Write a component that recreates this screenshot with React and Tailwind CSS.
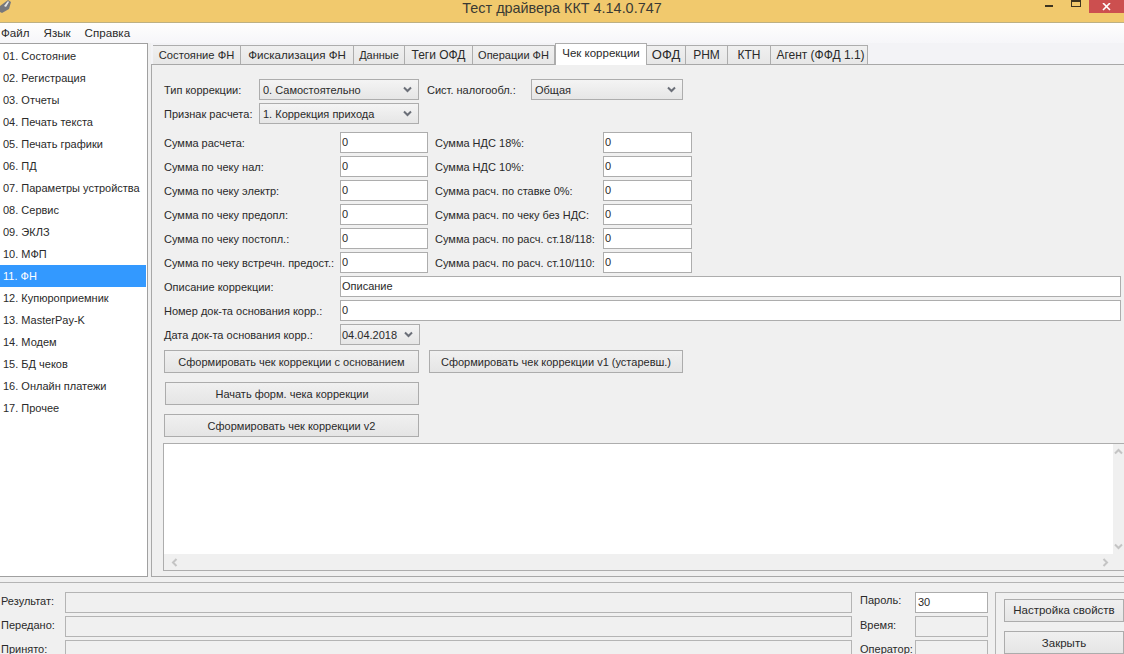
const menuItems = ['Файл', 'Язык', 'Справка'];

const sideItems = [
  '01. Состояние', '02. Регистрация', '03. Отчеты', '04. Печать текста', '05. Печать графики', '06. ПД',
  '07. Параметры устройства', '08. Сервис', '09. ЭКЛЗ', '10. МФП', '11. ФН', '12. Купюроприемник',
  '13. MasterPay-K', '14. Модем', '15. БД чеков', '16. Онлайн платежи', '17. Прочее',
];

const tabs = [
  { name: 'Состояние ФН', w: 'w-[88px] text-[11.2px]' },
  { name: 'Фискализация ФН', w: 'w-[113px] text-[11.6px]' },
  { name: 'Данные', w: 'w-[51px]' },
  { name: 'Теги ОФД', w: 'w-[68px] text-[12px]' },
  { name: 'Операции ФН', w: 'w-[82px]' },
  { name: 'Чек коррекции', w: 'w-[92px] text-[11.5px]', active: true },
  { name: 'ОФД', w: 'w-[39px] text-[13px]' },
  { name: 'РНМ', w: 'w-[42px] text-[12px]' },
  { name: 'КТН', w: 'w-[43px] text-[12px]' },
  { name: 'Агент (ФФД 1.1)', w: 'w-[97px] text-[12px] pl-[3px]' },
];

const sumRows = [
  ['Сумма расчета:', 'Сумма НДС 18%:'],
  ['Сумма по чеку нал:', 'Сумма НДС 10%:'],
  ['Сумма по чеку электр:', 'Сумма расч. по ставке 0%:'],
  ['Сумма по чеку предопл:', 'Сумма расч. по чеку без НДС:'],
  ['Сумма по чеку постопл.:', 'Сумма расч. по расч. ст.18/118:'],
  ['Сумма по чеку встречн. предост.:', 'Сумма расч. по расч. ст.10/110:'],
];

const Chevron = () => (
  <svg width="9" height="7" viewBox="0 0 9 7" className="shrink-0">
    <path d="M1 1.5 L4.5 5 L8 1.5" fill="none" stroke="#6b6f78" strokeWidth="2" />
  </svg>
);

const Select = ({ value, className }) => (
  <div className={`flex h-[21px] shrink-0 items-center justify-between border border-[#adadad] bg-gradient-to-b from-[#f4f4f4] to-[#e6e6e6] pr-[6px] ${className}`}>
    <span className="pt-[2px]">{value}</span>
    <Chevron />
  </div>
);

const Input = ({ value, className }) => (
  <div className={`flex h-[21px] shrink-0 items-center border border-[#adadad] bg-white pb-[1px] pl-[1px] ${className}`}>{value}</div>
);

const Button = ({ children, className }) => (
  <div className={`flex h-[23px] shrink-0 items-center justify-center border border-[#acacac] bg-gradient-to-b from-[#f0f0f0] to-[#e5e5e5] pt-[2px] ${className}`}>
    {children}
  </div>
);

export default function App() {
  return (
    <div className="flex h-[654px] w-[1124px] flex-col overflow-hidden bg-[#f0f0f0] text-[11px] text-[#2a2a2a] [font-family:'Liberation_Sans',sans-serif]">
      <div className="relative flex h-[23px] shrink-0 items-center justify-center border-b border-[#bdb083] bg-[#f1c96d] pb-[5px] text-[14.4px] text-[#3a3a34]">
        <svg width="14" height="14" viewBox="0 0 14 14" className="absolute left-0 top-0">
          <path d="M0 6 L8 0 L11 2 L9 9 L2 13 L0 12 Z" fill="#77787c" />
          <path d="M4 6 L8 1 L9 2 L6 7 Z" fill="#e6e6e6" />
        </svg>
        Тест драйвера ККТ 4.14.0.747
        <div className="absolute right-0 top-0 flex items-start">
          <div className="mr-[18px] mt-[5px] h-[2px] w-[8px] bg-[#3d3420]" />
          <div className="mr-[8px] h-[7px] w-[10px] border border-t-2 border-[#3d3420]" />
          <div className="flex h-[13px] w-[35px] items-center justify-center bg-[#cc4f4f]">
            <svg width="9" height="8" viewBox="0 0 9 8">
              <path d="M1 0 L8 7 M8 0 L1 7" stroke="#fff" strokeWidth="1.6" />
            </svg>
          </div>
        </div>
      </div>

      <div className="flex h-[20px] shrink-0 items-center gap-[14px] bg-gradient-to-b from-[#fffefd] to-[#f6f6f9] pl-[1px] text-[11.6px]">
        {menuItems.map((m) => <span key={m}>{m}</span>)}
      </div>

      <div className="flex h-[534px] shrink-0">
        <div className="flex w-[148px] shrink-0 flex-col border-r border-t border-b border-[#a0a0a0] bg-white pr-[1px] pt-[1px]">
          {sideItems.map((item) => (
            <div
              key={item}
              className={`flex h-[22px] shrink-0 items-center pl-[3px] ${item === '11. ФН' ? 'bg-[#3399ff] text-white' : ''}`}
            >
              {item}
            </div>
          ))}
        </div>

        <div className="ml-[3px] flex min-w-0 flex-1 flex-col">
          <div className="flex h-[21px] shrink-0 items-end bg-[#f3f3f6] pl-[2px]">
            {tabs.map((t) => (
              <div
                key={t.name}
                className={
                  t.active
                    ? `z-10 -mb-px flex h-[22px] items-center justify-center border border-b-0 border-[#adadad] bg-white pb-[2px] ${t.w}`
                    : `flex h-[19px] items-center justify-center border-r border-t border-[#adadad] bg-gradient-to-b from-[#f0f0f0] to-[#e7e7e7] ${t.w}`
                }
              >
                {t.name}
              </div>
            ))}
          </div>

          <div className="flex min-h-0 flex-1 flex-col border-l border-t border-b border-[#a8a8a8] pl-[11px] pt-[14px]">
            <div className="flex flex-col gap-[3px] pl-[1px]">
              <div className="flex items-center">
                <span className="w-[95px] shrink-0 pt-[2px]">Тип коррекции:</span>
                <Select value="0. Самостоятельно" className="w-[160px] pl-[3px]" />
                <span className="ml-[8px] w-[104px] shrink-0 pt-[2px]">Сист. налогообл.:</span>
                <Select value="Общая" className="w-[152px] pl-[3px]" />
              </div>
              <div className="flex items-center">
                <span className="w-[95px] shrink-0 pt-[2px]">Признак расчета:</span>
                <Select value="1. Коррекция прихода" className="w-[160px] pl-[3px]" />
              </div>

              <div className="mt-[5px] flex flex-col gap-[3px]">
                {sumRows.map(([left, right]) => (
                  <div key={left} className="flex items-center">
                    <span className="w-[176px] shrink-0 pt-[2px]">{left}</span>
                    <Input value="0" className="w-[88px]" />
                    <span className="ml-[7px] w-[168px] shrink-0 pt-[2px]">{right}</span>
                    <Input value="0" className="w-[89px]" />
                  </div>
                ))}
              </div>

              <div className="flex items-center">
                <span className="w-[176px] shrink-0 pt-[2px]">Описание коррекции:</span>
                <Input value="Описание" className="w-[781px]" />
              </div>
              <div className="flex items-center">
                <span className="w-[176px] shrink-0 pt-[2px]">Номер док-та основания корр.:</span>
                <Input value="0" className="w-[781px]" />
              </div>
              <div className="flex items-center">
                <span className="w-[176px] shrink-0 pt-[2px]">Дата док-та основания корр.:</span>
                <Select value="04.04.2018" className="w-[80px] pl-[1px]" />
              </div>
            </div>

            <div className="mt-[5px] flex gap-[10px] pl-[1px]">
              <Button className="w-[255px]">Сформировать чек коррекции с основанием</Button>
              <Button className="w-[254px]">Сформировать чек коррекции v1 (устаревш.)</Button>
            </div>
            <Button className="ml-[2px] mt-[9px] w-[254px]">Начать форм. чека коррекции</Button>
            <Button className="ml-[1px] mt-[9px] w-[255px]">Сформировать чек коррекции v2</Button>

            <div className="mt-[6px] flex h-[128px] shrink-0 flex-col border-l border-t border-b border-[#adadad]">
              <div className="flex min-h-0 flex-1">
                <div className="flex-1 bg-white" />
                <div className="flex w-[11px] flex-col items-center justify-between py-[4px]">
                  <svg width="9" height="7" viewBox="0 0 9 7"><path d="M1 5.5 L4.5 2 L8 5.5" fill="none" stroke="#c4c4c4" strokeWidth="2" /></svg>
                  <svg width="9" height="7" viewBox="0 0 9 7"><path d="M1 1.5 L4.5 5 L8 1.5" fill="none" stroke="#c4c4c4" strokeWidth="2" /></svg>
                </div>
              </div>
              <div className="flex h-[16px] shrink-0 items-center justify-between pl-[7px] pr-[15px]">
                <svg width="7" height="9" viewBox="0 0 7 9"><path d="M5.5 1 L2 4.5 L5.5 8" fill="none" stroke="#c4c4c4" strokeWidth="2" /></svg>
                <svg width="7" height="9" viewBox="0 0 7 9"><path d="M1.5 1 L5 4.5 L1.5 8" fill="none" stroke="#c4c4c4" strokeWidth="2" /></svg>
              </div>
            </div>
          </div>
        </div>
      </div>

      <div className="mt-[5px] flex min-h-0 flex-1 border-t border-[#b4b4b4] pt-[9px]">
        <div className="flex w-[852px] shrink-0 flex-col gap-[3px] pl-[1px]">
          {['Результат:', 'Передано:', 'Принято:'].map((label) => (
            <div key={label} className="flex h-[21px] items-center">
              <span className="w-[65px] shrink-0 pb-[3px]">{label}</span>
              <div className="-ml-px h-[21px] flex-1 border border-[#b4b4b4]" />
            </div>
          ))}
        </div>
        <div className="ml-[8px] flex w-[128px] shrink-0 flex-col gap-[3px]">
          <div className="flex h-[21px] items-center">
            <span className="w-[55px] shrink-0 pb-[5px]">Пароль:</span>
            <Input value="30" className="w-[73px] !pl-[2px]" />
          </div>
          <div className="flex h-[21px] items-center">
            <span className="w-[55px] shrink-0 pb-[2px]">Время:</span>
            <div className="h-[21px] w-[73px] border border-[#b4b4b4]" />
          </div>
          <div className="flex h-[21px] items-center">
            <span className="w-[55px] shrink-0 pb-[3px]">Оператор:</span>
            <div className="h-[21px] w-[73px] border border-[#b4b4b4]" />
          </div>
        </div>
        <div className="ml-[7px] flex flex-1 flex-col border-l border-t border-[#b4b4b4] pl-[8px] pt-[6px]">
          <Button className="w-[120px] text-[11.5px] !pt-0">Настройка свойств</Button>
          <Button className="mt-[9px] w-[120px] text-[11.5px]">Закрыть</Button>
        </div>
      </div>
    </div>
  );
}
